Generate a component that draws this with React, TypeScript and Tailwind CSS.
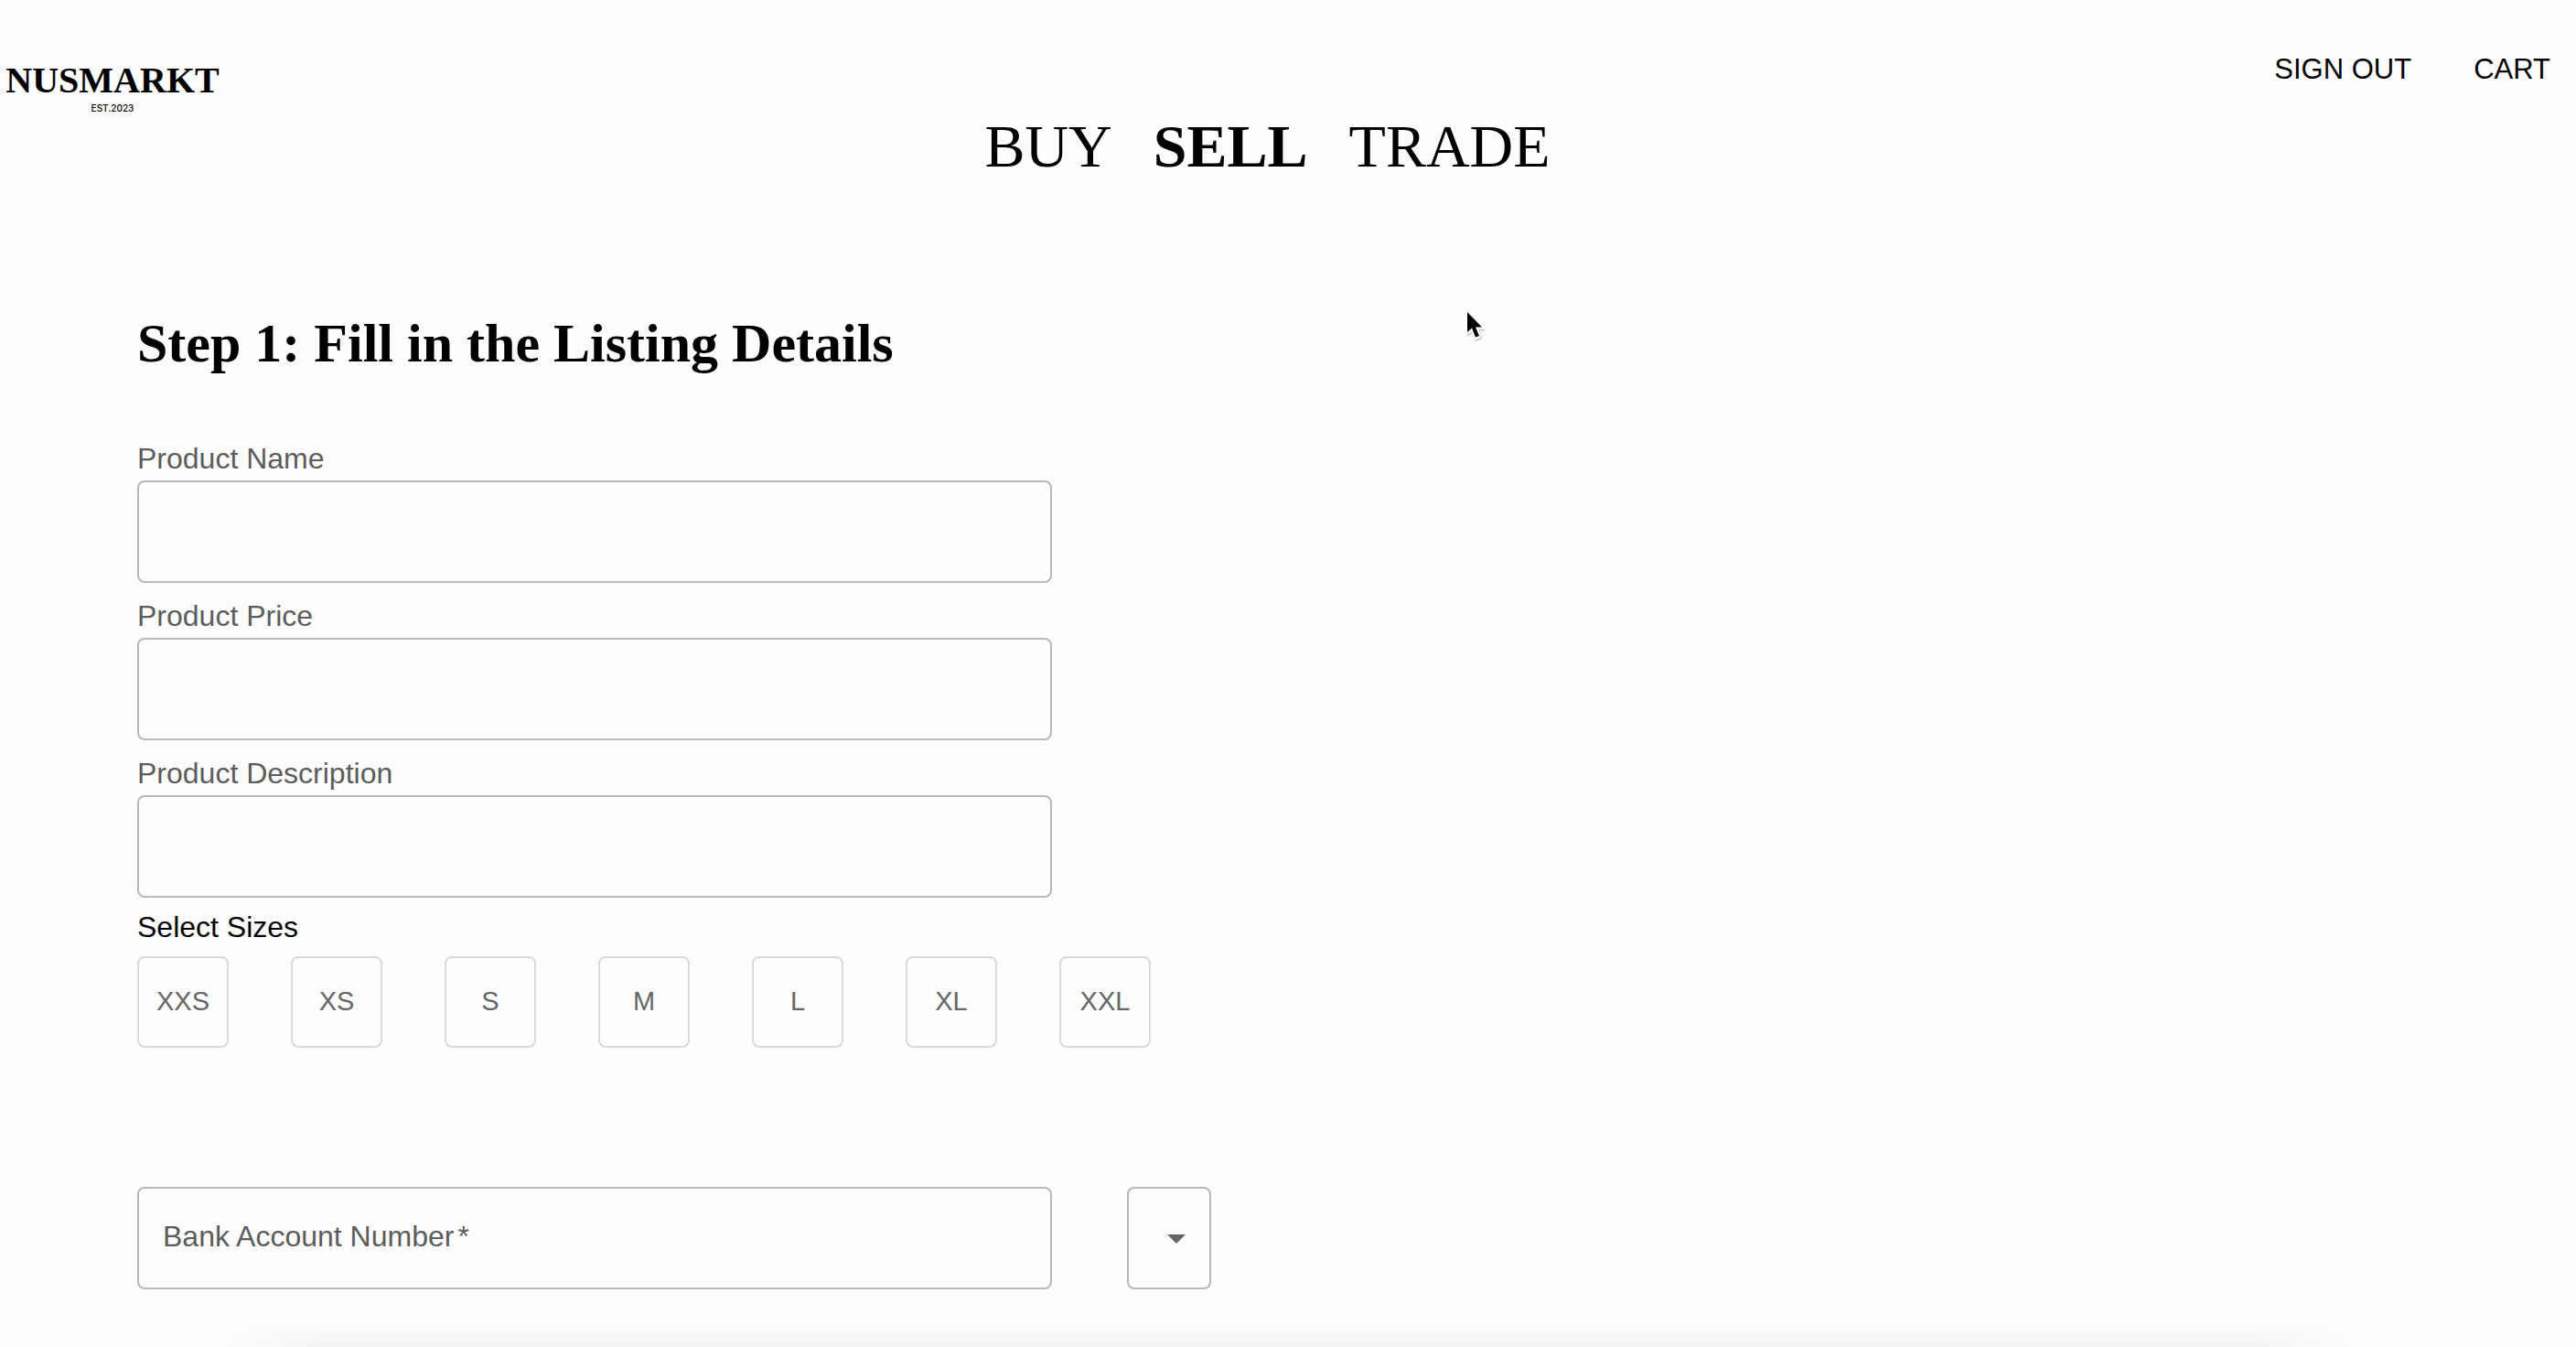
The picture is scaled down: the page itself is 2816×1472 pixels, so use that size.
import { useState, type ReactNode } from "react";

const SIZES = ["XXS", "XS", "S", "M", "L", "XL", "XXL"];

const FIELDS = [
  { id: "product-name", label: "Product Name" },
  { id: "product-price", label: "Product Price" },
  { id: "product-description", label: "Product Description" },
];

const CATEGORIES = [
  { href: "#buy", label: "BUY", active: false },
  { href: "#sell", label: "SELL", active: true },
  { href: "#trade", label: "TRADE", active: false },
];

function Logo() {
  return (
    <a href="#home" className="flex w-[246px] flex-col items-center text-black" aria-label="NUSMARKT, est. 2023">
      <span className="font-['Liberation_Serif',serif] text-[40px] leading-[48px] font-bold">NUSMARKT</span>
      <span className="font-['Inter',sans-serif] text-[10px] leading-[12px] font-medium">EST.2023</span>
    </a>
  );
}

function Header() {
  return (
    <header>
      <div className="flex h-[122px] items-start justify-between pr-7">
        <div className="pt-16">
          <Logo />
        </div>
        <div className="flex gap-[68px] pt-[58px] text-[31px] leading-9 text-black">
          <button type="button">SIGN OUT</button>
          <button type="button">CART</button>
        </div>
      </div>
      <nav className="flex justify-center font-['Liberation_Serif',serif] text-[66px] leading-[76px] text-black">
        {CATEGORIES.map((c) => (
          <a key={c.label} href={c.href} className={c.active ? "mr-[45px] font-bold" : "mr-[45px]"}>
            {c.label}
          </a>
        ))}
      </nav>
    </header>
  );
}

function Field({ id, label }: { id: string; label: string }) {
  return (
    <div className="flex flex-col">
      <label htmlFor={id} className="mb-1 text-[32px] leading-10 text-[#5c5c5c]">
        {label}
      </label>
      <input id={id} type="text" className="h-28 w-full rounded-lg border-2 border-[#b8b8b8] bg-transparent px-7 text-[32px] text-black" />
    </div>
  );
}

function SizeButton({ selected, onClick, children }: { selected: boolean; onClick: () => void; children: ReactNode }) {
  return (
    <button
      type="button"
      aria-pressed={selected}
      onClick={onClick}
      className={
        selected
          ? "size-[100px] rounded-lg border-2 border-[#dadada] bg-[#ebebeb] text-[29px] text-black"
          : "size-[100px] rounded-lg border-2 border-[#dadada] text-[29px] text-[#666666]"
      }
    >
      {children}
    </button>
  );
}

function Cursor() {
  return (
    <svg className="pointer-events-none absolute top-[337px] left-[1600px] h-10 w-7" viewBox="0 0 28 40" aria-hidden="true">
      <path d="M4 4V26L9 21.5L13 31.5L17 30L13 20.5H20Z" fill="#d0d0d0" stroke="#d4d4d4" strokeWidth="5" strokeLinejoin="round" transform="translate(1 2)" />
      <path d="M4 4V26L9 21.5L13 31.5L17 30L13 20.5H20Z" fill="#000" stroke="#fff" strokeWidth="4" paintOrder="stroke" />
    </svg>
  );
}

export default function App() {
  const [size, setSize] = useState<string | null>(null);
  const [account, setAccount] = useState("");

  return (
    <div className="relative min-h-screen overflow-hidden bg-[#fdfdfd] font-['Liberation_Sans',Arial,sans-serif]">
      <Header />
      <main className="pr-10 pl-[150px]">
        <h1 className="pt-[142px] font-['Liberation_Serif',serif] text-[60px] leading-[70px] font-bold text-black">
          Step 1: Fill in the Listing Details
        </h1>
        <form className="pt-[71px]" onSubmit={(e) => e.preventDefault()}>
          <div className="mb-3 flex max-w-[1000px] flex-col gap-4">
            {FIELDS.map((f) => (
              <Field key={f.id} id={f.id} label={f.label} />
            ))}
          </div>
          <fieldset>
            <legend className="mb-3 text-[32px] leading-10 text-black">Select Sizes</legend>
            <div className="flex flex-wrap gap-[68px]">
              {SIZES.map((s) => (
                <SizeButton key={s} selected={size === s} onClick={() => setSize(size === s ? null : s)}>
                  {s}
                </SizeButton>
              ))}
            </div>
          </fieldset>
          <div className="mt-[152px] flex gap-[82px] pb-16">
            <div className="relative w-full max-w-[1000px]">
              <input
                id="bank"
                type="text"
                required
                value={account}
                onChange={(e) => setAccount(e.target.value)}
                className="h-28 w-full rounded-lg border-2 border-[#b8b8b8] bg-transparent px-7 text-[32px] text-black"
              />
              <label
                htmlFor="bank"
                className={
                  account
                    ? "sr-only"
                    : "pointer-events-none absolute inset-y-0 left-7 flex items-center gap-1 pb-1 text-[32px] text-[#5c5c5c]"
                }
              >
                Bank Account Number <span>*</span>
              </label>
            </div>
            <div className="relative w-[92px] shrink-0">
              <select aria-label="Bank" defaultValue="" className="h-28 w-full appearance-none rounded-lg border-2 border-[#b8b8b8] bg-transparent px-7 text-[32px] text-black">
                <option value="" />
              </select>
              <svg className="pointer-events-none absolute top-[52px] right-7 h-[10px] w-5" viewBox="0 0 20 10" aria-hidden="true">
                <path d="M0 0H20L10 10Z" fill="#666666" />
              </svg>
            </div>
          </div>
        </form>
      </main>
      <div className="pointer-events-none absolute inset-x-[240px] bottom-0 h-7 bg-linear-to-b from-transparent to-black/4 mask-x-from-95% mask-x-to-100%" />
      <Cursor />
    </div>
  );
}
